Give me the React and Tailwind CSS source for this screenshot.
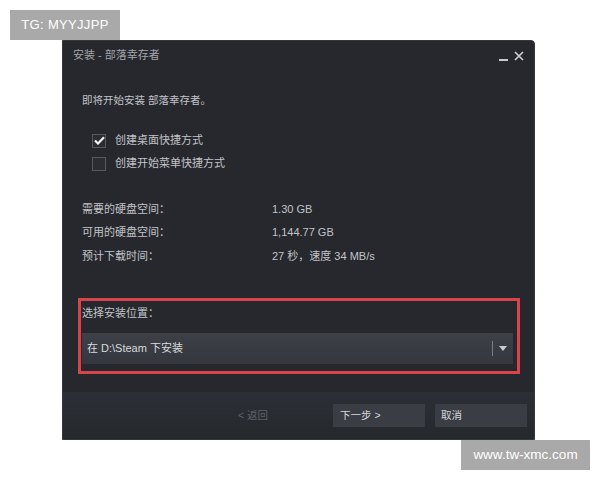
import React, { useState } from 'react';

const cjk = { fontFamily: '"Liberation Sans", "Noto Sans CJK SC", sans-serif' };

const Checkbox = ({ checked, onToggle, label }) => (
    <div className="flex items-center h-[23px] cursor-pointer" onClick={onToggle}>
        <div className="w-[14px] h-[14px] border border-[#55585e] bg-[#2b2d32] flex items-center justify-center">
            {checked && (
                <svg width="11" height="9" viewBox="0 0 11 9">
                    <path d="M1 4.5 L4 7.5 L10 1.2" stroke="#f2f2f2" strokeWidth="2.2" fill="none" />
                </svg>
            )}
        </div>
        <span className="ml-[9px] text-[11px] text-[#c2c4c8]">{label}</span>
    </div>
);

const InfoRow = ({ label, value }) => (
    <div className="flex items-center h-[23.5px] text-[11px] text-[#c2c4c8]">
        <span className="w-[190px]">{label}</span>
        <span>{value}</span>
    </div>
);

const App = () => {
    const [desktop, setDesktop] = useState(true);
    const [startMenu, setStartMenu] = useState(false);

    return (
        <div className="relative w-[600px] h-[480px] bg-white overflow-hidden" style={cjk}>
            <div className="absolute left-[10px] top-[10px] w-[110px] h-[30px] bg-[#a9a9a9] flex items-center justify-center text-white text-[13px] font-medium tracking-wide">
                TG: MYYJJPP
            </div>

            <div className="ml-[62px] pt-[40px]">
                <div className="w-[473px] h-[400px] bg-[#26282d] border border-[#35373c] rounded-tr-[4px] flex flex-col">
                    <div className="h-[29px] flex items-center justify-between pl-[10px] pr-[10px]">
                        <span className="text-[11px] text-[#a3a5a9]">安装 - 部落幸存者</span>
                        <div className="flex items-center gap-[6px] text-[#c8cacd]">
                            <div className="w-[9px] h-[2px] bg-[#c8cacd] mt-[8px]" />
                            <svg width="10" height="10" viewBox="0 0 10 10">
                                <path d="M1 1 L9 9 M9 1 L1 9" stroke="#d0d2d5" strokeWidth="1.6" />
                            </svg>
                        </div>
                    </div>

                    <div className="pl-[19px] pr-[20px] flex flex-col">
                        <div className="mt-[21px] h-[20px] flex items-center text-[10.5px] text-[#c2c4c8]">
                            即将开始安装 部落幸存者。
                        </div>

                        <div className="mt-[18px] pl-[10px]">
                            <Checkbox checked={desktop} onToggle={() => setDesktop(!desktop)} label="创建桌面快捷方式" />
                            <Checkbox checked={startMenu} onToggle={() => setStartMenu(!startMenu)} label="创建开始菜单快捷方式" />
                        </div>

                        <div className="mt-[22px]">
                            <InfoRow label="需要的硬盘空间：" value="1.30 GB" />
                            <InfoRow label="可用的硬盘空间：" value="1,144.77 GB" />
                            <InfoRow label="预计下载时间：" value="27 秒，速度 34 MB/s" />
                        </div>

                        <div className="mt-[30px] -ml-[4px] w-[442px] h-[76px] border-[3px] border-[#d9444c] pl-[1px] pr-[4px]">
                            <div className="h-[26px] flex items-center text-[11px] text-[#c2c4c8]">选择安装位置：</div>
                            <div className="mt-[6px] h-[31px] bg-gradient-to-b from-[#3d4047] to-[#34373d] flex items-center justify-between pl-[5px] pr-[6px]">
                                <span className="text-[11px] text-[#d8dadd]">在 D:\Steam 下安装</span>
                                <div className="flex items-center gap-[6px]">
                                    <div className="w-px h-[15px] bg-[#7a7d83]" />
                                    <svg width="8" height="5" viewBox="0 0 8 5">
                                        <path d="M0 0 L8 0 L4 5 Z" fill="#c9cbce" />
                                    </svg>
                                </div>
                            </div>
                        </div>
                    </div>

                    <div className="mt-auto h-[47px] bg-gradient-to-b from-[#2c2f35] to-[#25282d] flex items-center pr-[8px]">
                        <span className="ml-[175px] w-[95px] shrink-0 whitespace-nowrap text-[10.5px] text-[#5f6268]">&lt; 返回</span>
                        <button className="w-[92px] h-[23px] shrink-0 bg-[#3a3d44] text-left pl-[7px] text-[10.5px] text-[#d6d8db]">下一步 &gt;</button>
                        <button className="ml-[10px] w-[92px] h-[23px] shrink-0 bg-[#3a3d44] text-left pl-[6px] text-[10.5px] text-[#d6d8db]">取消</button>
                    </div>
                </div>
            </div>

            <div className="absolute left-[461px] top-[440px] w-[129px] h-[30px] bg-[#a9a9a9] flex items-center justify-center text-white text-[13.5px]">
                www.tw-xmc.com
            </div>
        </div>
    );
};

export default App;
